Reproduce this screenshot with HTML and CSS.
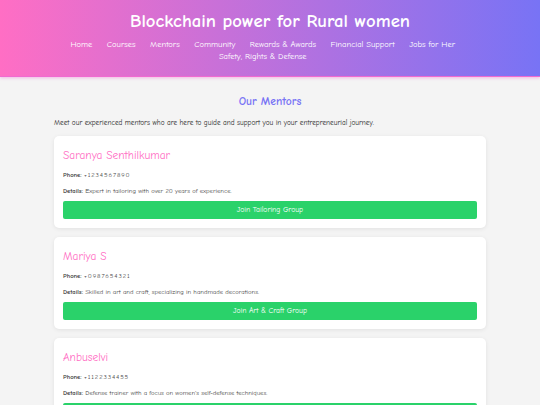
FILE: index.html
```html
<!DOCTYPE html>
<html lang="en">
<head>
<meta charset="utf-8">
<title>Blockchain power for Rural women</title>
<link rel="stylesheet" href="styles.css">
</head>
<body>
<header class="site-header">
  <h1 class="site-title">Blockchain power for Rural women</h1>
  <nav class="main-nav">
    <a href="#">Home</a>
    <a href="#">Courses</a>
    <a href="#">Mentors</a>
    <a href="#">Community</a>
    <a href="#">Rewards &amp; Awards</a>
    <a href="#">Financial Support</a>
    <a href="#">Jobs for Her</a>
    <a href="#">Safety, Rights &amp; Defense</a>
  </nav>
</header>
<main class="container">
  <h2 class="section-title">Our Mentors</h2>
  <p class="intro">Meet our experienced mentors who are here to guide and support you in your entrepreneurial journey.</p>

  <div class="card">
    <h3 class="mentor-name">Saranya Senthilkumar</h3>
    <p class="info"><strong>Phone:</strong> <span class="num">+1234567890</span></p>
    <p class="info"><strong>Details:</strong> Expert in tailoring with over 20 years of experience.</p>
    <a class="join-btn" href="#">Join Tailoring Group</a>
  </div>

  <div class="card">
    <h3 class="mentor-name">Mariya S</h3>
    <p class="info"><strong>Phone:</strong> <span class="num">+0987654321</span></p>
    <p class="info"><strong>Details:</strong> Skilled in art and craft, specializing in handmade decorations.</p>
    <a class="join-btn" href="#">Join Art &amp; Craft Group</a>
  </div>

  <div class="card">
    <h3 class="mentor-name">Anbuselvi</h3>
    <p class="info"><strong>Phone:</strong> <span class="num">+1122334455</span></p>
    <p class="info"><strong>Details:</strong> Defense trainer with a focus on women's self-defense techniques.</p>
    <a class="join-btn" href="#">Join Self-Defense Group</a>
  </div>
</main>
</body>
</html>
```

FILE: styles.css
```css
html, body {
  margin: 0;
  padding: 0;
}

body {
  background: #f4f4f4;
  font-family: "Comic Sans MS", "Comic Neue", "Liberation Sans", Arial, sans-serif;
  color: #333;
}

.site-header {
  background: linear-gradient(90deg, #ff6ec4 0%, #7873f5 100%);
  padding: 11px 0 14px;
  border-bottom: 1px solid #f06ad0;
  box-shadow: 0 1px 3px rgba(240, 106, 208, 0.45);
  text-align: center;
}

.site-title {
  margin: 0;
  font-size: 18.7px;
  line-height: 20px;
  font-weight: bold;
  color: #ffffff;
}

.main-nav {
  max-width: 440px;
  margin: 7px auto 0;
  display: flex;
  flex-wrap: wrap;
  justify-content: center;
}

.main-nav a {
  color: #ffffff;
  text-decoration: none;
  font-size: 8.5px;
  line-height: 12px;
  margin-right: 14.5px;
}

.container {
  width: 432px;
  margin: 0 auto;
  padding-top: 18px;
}

.section-title {
  margin: 0;
  text-align: center;
  font-size: 11.6px;
  line-height: 14px;
  font-weight: bold;
  color: #7873f5;
}

.intro {
  margin: 8.5px 0 9.5px;
  font-size: 7.25px;
  line-height: 9px;
  color: #2a2a2a;
}

.card {
  background: #ffffff;
  border-radius: 5px;
  box-shadow: 0 1px 4px rgba(0, 0, 0, 0.08);
  padding: 13px 9px 9px;
  margin-bottom: 9px;
}

.mentor-name {
  margin: 0 0 7.5px;
  font-size: 11.4px;
  line-height: 14px;
  font-weight: normal;
  color: #ff6ec4;
}

.info {
  margin: 0 0 7px;
  font-size: 6.6px;
  line-height: 9px;
  color: #4a4a4a;
}

.info strong {
  color: #3a3a3a;
}

.num {
  letter-spacing: 0.9px;
}

.join-btn {
  display: block;
  margin-top: -1.5px;
  height: 18px;
  line-height: 18px;
  border-radius: 2px;
  background: #2ad26a;
  color: #ffffff;
  text-align: center;
  text-decoration: none;
  font-size: 7.6px;
}
```
